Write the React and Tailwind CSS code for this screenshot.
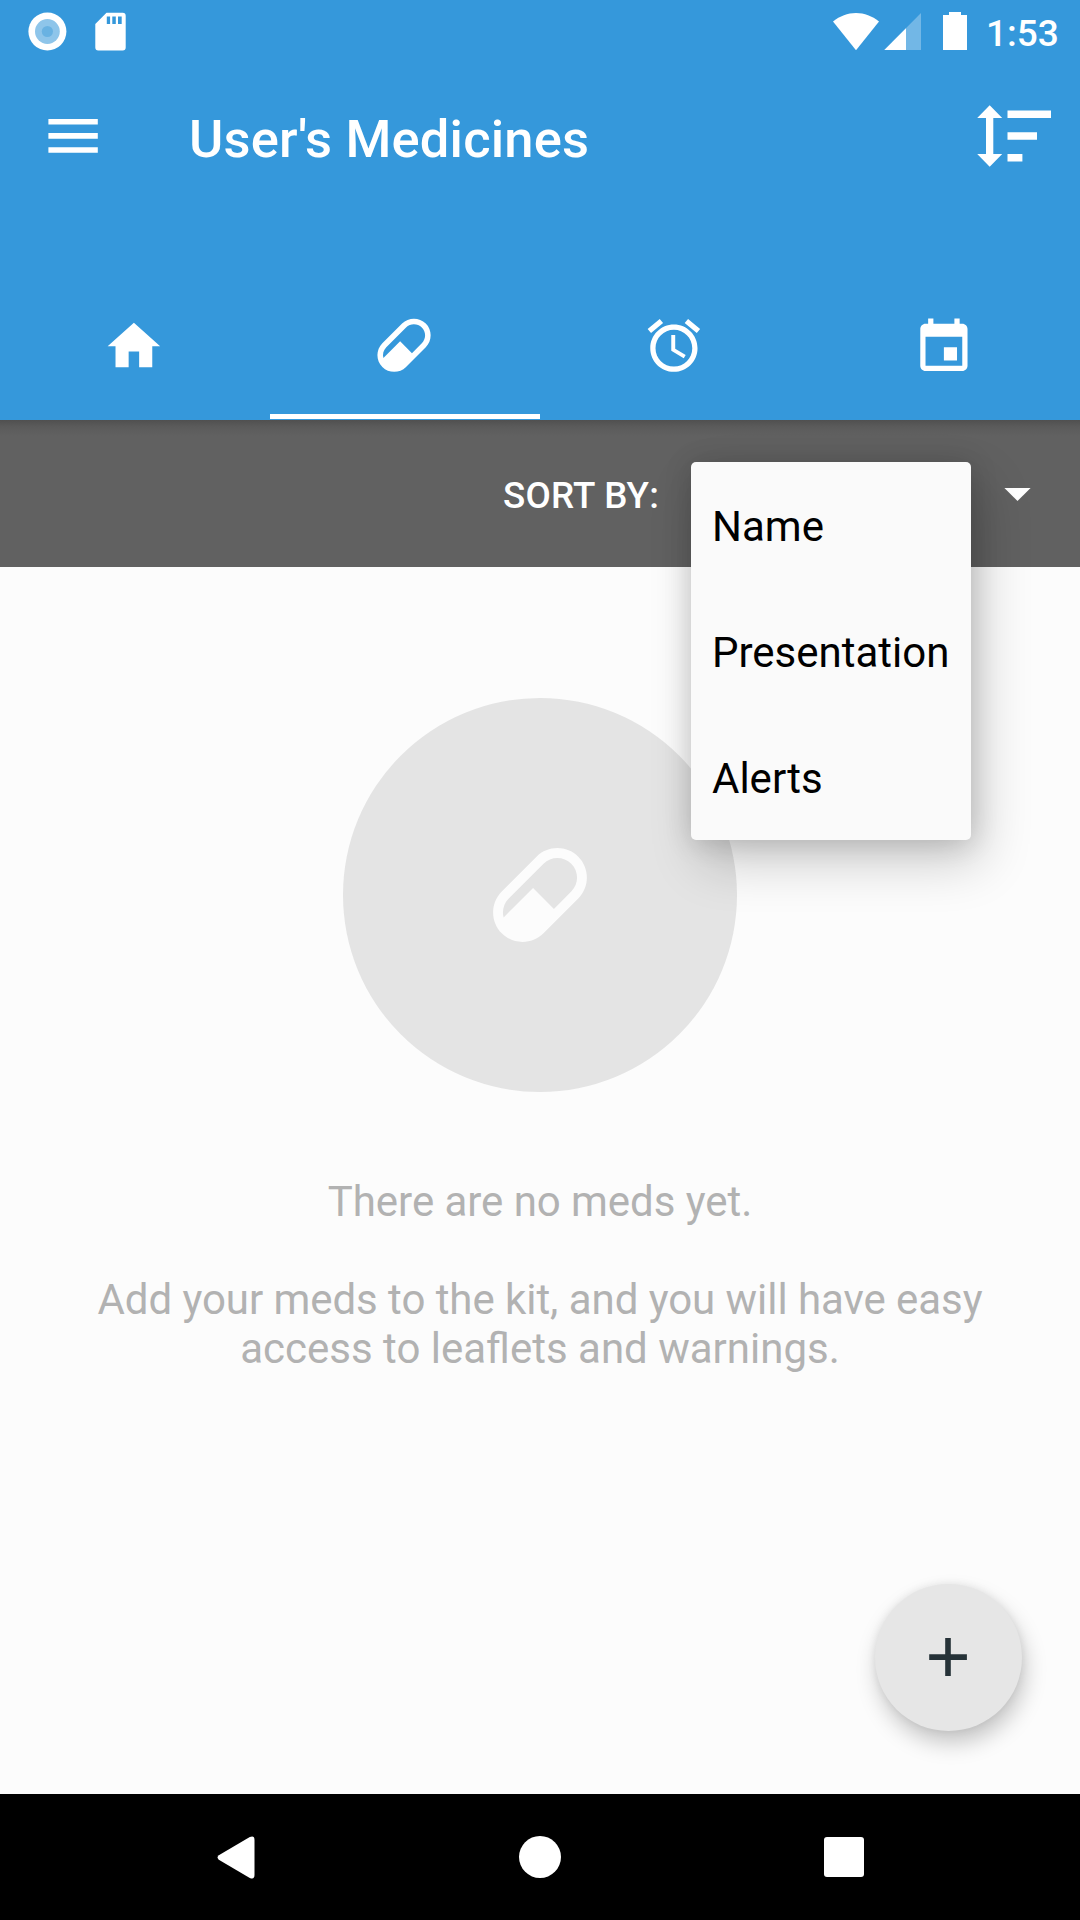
const PILL =
  "M4.22,11.29L11.29,4.22C13.64,1.88 17.43,1.88 19.78,4.22C22.12,6.56 22.12,10.36 19.78,12.71L12.71,19.78C10.36,22.12 6.56,22.12 4.22,19.78C1.88,17.43 1.88,13.64 4.22,11.29M5.64,12.71C4.59,13.75 4.24,15.24 4.6,16.57L10.59,10.59L14.83,14.83L18.36,11.29C19.93,9.73 19.93,7.2 18.36,5.64C16.8,4.07 14.27,4.07 12.71,5.64L5.64,12.71Z";

const TABS = [
  {
    name: "Home",
    box: "-0.15 0.05 24 24",
    size: "size-[63px]",
    d: "M10 20v-6h4v6h5v-8h3L12 3 2 12h3v8z",
  },
  { name: "Medicines", box: "-0.2 0.45 24 24", size: "size-[67px]", d: PILL, active: true },
  {
    name: "Alarms",
    box: "-0.15 0.35 24 24",
    size: "size-[63px]",
    d: "M22 5.72l-4.6-3.86-1.29 1.53 4.6 3.86L22 5.72zM7.88 3.39L6.6 1.86 2 5.71l1.29 1.53 4.59-3.85zM12.5 8H11v6l4.75 2.85.75-1.23-4-2.37V8zM12 4c-4.97 0-9 4.03-9 9s4.02 9 9 9c4.97 0 9-4.03 9-9s-4.03-9-9-9zm0 16c-3.87 0-7-3.13-7-7s3.13-7 7-7 7 3.13 7 7-3.13 7-7 7z",
  },
  {
    name: "Calendar",
    box: "-0.15 -0.3 24 24",
    size: "size-[63px]",
    d: "M17 12h-5v5h5v-5zM16 1v2H8V1H6v2H5c-1.11 0-1.99.9-1.99 2L3 19c0 1.1.89 2 2 2h14c1.1 0 2-.9 2-2V5c0-1.1-.9-2-2-2h-1V1h-2zm3 18H5V8h14v11z",
  },
];

function StatusBar() {
  return (
    <div className="flex h-[63px] items-center justify-between pl-[28px] pr-[21px]">
      <div className="flex items-center gap-[28px]">
        <svg className="h-[39px] w-[39px]" viewBox="0 0 39 39">
          <circle cx="19.4" cy="19.5" r="19" fill="#fff" />
          <circle cx="19.4" cy="19.5" r="12.4" fill="#8ec5ea" />
          <circle cx="19.4" cy="19.5" r="5.6" fill="#69b2e2" />
        </svg>
        <svg className="h-[39px] w-[31px]" viewBox="0 0 31 39" fill="#fff" fillRule="evenodd">
          <path d="M11.5 .7H27.700a3 3 0 0 1 3 3V35.500a3 3 0 0 1 -3 3H3.300a3 3 0 0 1 -3-3V12ZM11.800 4.500v7.500h3.300v-7.500ZM17.300 4.500v7.500h3.500v-7.500ZM23 4.500v7.500h3.700v-7.500Z" />
        </svg>
      </div>
      <div className="flex items-center text-white">
        <svg className="h-[63px] w-[134px]" viewBox="833 0 134 63" fill="#fff">
          <path d="M833 21.500C840 16 847.500 13 856 13s16 3 23 8.500L856 50.300Z" />
          <path d="M884.300 50 921 13V50Z" opacity=".3" />
          <path d="M884.300 50 906 28.300V50Z" />
          <path d="M949 12h12v3h6v35h-24V15h6Z" />
        </svg>
        <span className="ml-[19px] h-[63px] w-[73px] whitespace-nowrap text-[37px] font-medium leading-[67px]">
          1:53
        </span>
      </div>
    </div>
  );
}

function AppBar() {
  return (
    <div className="flex h-[147px] items-center pl-[48px] pr-[28px] text-white">
      <svg className="h-[36px] w-[51px]" viewBox="0 0.9 51 36" fill="#fff">
        <path d="M.4 .900h49.400v5.500H.4ZM.4 15h49.400v5.600H.4ZM.4 29.100h49.400v5.600H.4Z" />
      </svg>
      <h1 className="ml-[90px] flex-1 pt-[5px] text-[52.5px] font-medium leading-none tracking-[0.18px]">
        User's Medicines
      </h1>
      <svg className="h-[63px] w-[75px]" viewBox="977 105 75 63" fill="#fff">
        <path d="M989.700 105.300 1002.200 118h-8.900v36h8.900L989.700 166.700 977.200 154h8.800V118h-8.800Z" />
        <path d="M1007.500 110.400H1051v7.600h-43.500ZM1007.500 132.200H1037v7.500h-29.500ZM1007.500 154h14.900v7.500h-14.900Z" />
      </svg>
    </div>
  );
}

function Tabs() {
  return (
    <nav className="mt-[62px] grid h-[148px] grid-cols-4">
      {TABS.map((tab) => (
        <button key={tab.name} aria-label={tab.name} className="flex flex-col items-center">
          <span className="flex h-[142px] items-center pr-[3px] pt-[6px]">
            <svg className={tab.size} viewBox={tab.box} fill="#fff">
              <path d={tab.d} />
            </svg>
          </span>
          {tab.active && <span className="h-[5px] w-full bg-white" />}
        </button>
      ))}
    </nav>
  );
}

function SortMenu() {
  return (
    <ul className="absolute left-[691px] top-[42px] z-20 w-[280px] rounded-[5px] bg-[#fafafa] text-[42px] text-black shadow-[10px_22px_52px_rgba(0,0,0,0.2),0_2px_28px_rgba(0,0,0,0.16)]">
      {["Name", "Presentation", "Alerts"].map((option) => (
        <li key={option} className="flex h-[126px] items-center whitespace-nowrap px-[21px] pt-[2px]">
          {option}
        </li>
      ))}
    </ul>
  );
}

export default function App() {
  return (
    <div className="flex h-[1920px] w-[1080px] flex-col overflow-hidden bg-[#fcfcfc] font-['Roboto',sans-serif]">
      <header className="h-[420px] shrink-0 bg-[#3598db]">
        <StatusBar />
        <AppBar />
        <Tabs />
      </header>

      <section className="relative z-10 flex h-[147px] shrink-0 items-center justify-between bg-[linear-gradient(to_bottom,#505050_0px,#5b5b5b_7px,#616161_16px)] pl-[503px] pr-[49px] text-white">
        <span className="pt-[5px] text-[36.75px] font-medium leading-none tracking-[0.2px]">SORT BY:</span>
        <svg className="h-[14px] w-[27px]" viewBox="0 0 27 14" fill="#fff">
          <path d="M.4 .9h26.200L13.500 14Z" />
        </svg>
        <SortMenu />
      </section>

      <main className="relative flex flex-1 flex-col items-center pt-[131px] text-center text-[42px] leading-[49px] tracking-[-0.05px] text-[#b2b2b2]">
        <div className="flex size-[394px] items-center justify-center rounded-full bg-[#e4e4e4]">
          <svg className="size-[118px]" viewBox="0 0 24 24" fill="#fcfcfc">
            <path d={PILL} />
          </svg>
        </div>
        <p className="mt-[85px]">There are no meds yet.</p>
        <p className="mt-[49px] whitespace-nowrap">
          Add your meds to the kit, and you will have easy
          <br />
          <span className="tracking-normal">access to leaflets and warnings.</span>
        </p>
        <button
          aria-label="Add medicine"
          className="absolute bottom-[63px] right-[58px] flex size-[147px] items-center justify-center rounded-full bg-[#e6e6e6] shadow-[3px_12px_22px_rgba(0,0,0,0.22),0_0_8px_rgba(0,0,0,0.08)]"
        >
          <svg className="size-[39px]" viewBox="0.3 0.3 39 39" fill="#263238">
            <path d="M16.500 .4h5.600v16.200H38.200v5.600H22.100v16H16.500v-16H.5v-5.600h16Z" />
          </svg>
        </button>
      </main>

      <footer className="flex h-[126px] shrink-0 items-center justify-between bg-black pl-[217px] pr-[216px]">
        <svg className="h-[43px] w-[38px]" viewBox="0 0 38 43" fill="#fff">
          <path d="M1.800 19.300 32.800 1.100Q37.500 -.8 37.500 4V39Q37.500 43.800 32.800 41.900L1.800 23.700Q-.6 21.500 1.800 19.300Z" />
        </svg>
        <div className="size-[42px] rounded-full bg-white" />
        <div className="size-[40px] rounded-[3px] bg-white" />
      </footer>
    </div>
  );
}
